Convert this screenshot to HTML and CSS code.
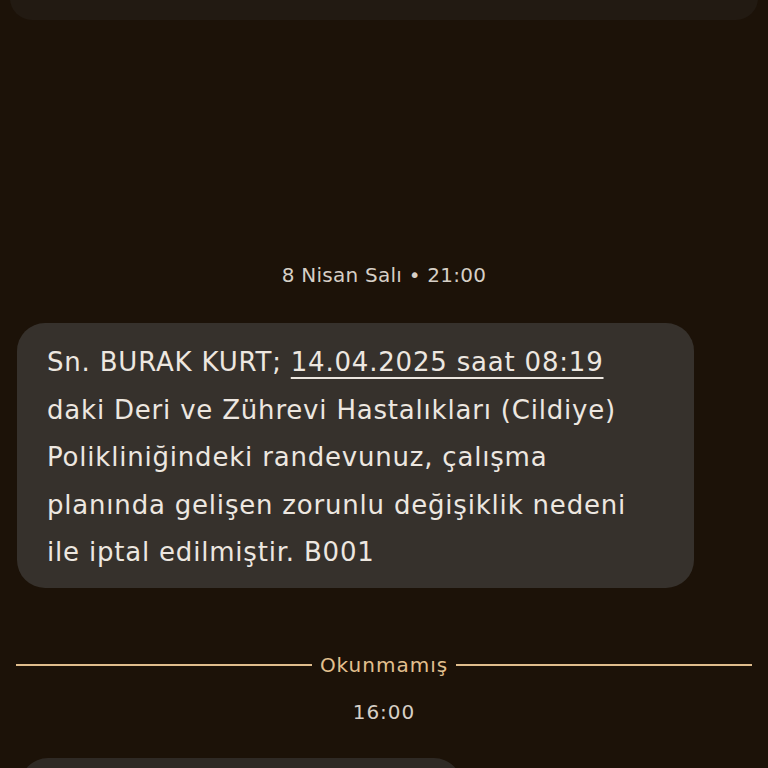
FILE: index.html
```html
<!DOCTYPE html>
<html lang="tr">
<head>
  <meta charset="UTF-8">
  <meta name="viewport" content="width=device-width, initial-scale=1.0">
  <title>Mesajlar</title>
  <link rel="stylesheet" href="styles.css">
</head>
<body>
  <div id="thread">
    <!-- Previous message (cut off at top) -->
    <div class="bubble bubble-top"></div>

    <p class="stamp stamp-date">8 Nisan Salı • 21:00</p>

    <!-- Incoming message -->
    <div class="bubble bubble-msg">
      <p>Sn. BURAK KURT; <span class="link">14.04.2025 saat 08:19</span><br>daki Deri ve Zührevi Hastalıkları (Cildiye)<br>Polikliniğindeki randevunuz, çalışma<br>planında gelişen zorunlu değişiklik nedeni<br>ile iptal edilmiştir. B001</p>
    </div>

    <!-- Unread divider -->
    <div class="unread">
      <span class="unread-line"></span>
      <span class="unread-label">Okunmamış</span>
      <span class="unread-line"></span>
    </div>

    <p class="stamp stamp-time">16:00</p>

    <div class="bubble bubble-next"></div>
  </div>
</body>
</html>
```

FILE: styles.css
```css
html, body {
  height: 100%;
}

body {
  background-color: #1c1208;
  color: #ede7e0;
  font-family: "DejaVu Sans", "Open Sans", sans-serif;
  margin: 0;
  overflow: hidden;
}

#thread {
  display: flex;
  flex-direction: column;
}

.bubble {
  background-color: #36312c;
  border-radius: 28px;
}

.bubble-top {
  height: 40px;
  margin: -20px 10px 0 10px;
  background-color: #221a12;
  border-radius: 0 0 22px 22px;
}

.stamp {
  margin: 0;
  text-align: center;
  color: #d6cfc6;
  font-size: 20px;
}

.stamp-date {
  margin-top: 241px;
  line-height: 28px;
  letter-spacing: 0.25px;
}

.bubble-msg {
  margin: 34px 74px 0 17px;
  padding: 16px 20px 11px 30px;
}

.bubble-msg p {
  margin: 0;
  font-size: 26px;
  line-height: 47.5px;
  letter-spacing: 0.8px;
  white-space: nowrap;
}

.link {
  text-decoration: underline;
  text-underline-offset: 6px;
  text-decoration-thickness: 2px;
}

.unread {
  display: flex;
  align-items: center;
  gap: 8px;
  margin: 63px 16px 0 16px;
}

.unread-line {
  flex: 1;
  height: 2px;
  background-color: #e0bd8c;
}

.unread-label {
  color: #e3c08f;
  font-size: 20px;
  line-height: 28px;
  letter-spacing: 1px;
}

.stamp-time {
  margin-top: 19px;
  line-height: 28px;
  letter-spacing: 1px;
}

.bubble-next {
  height: 60px;
  margin: 32px 306px 0 20px;
  background-color: #2f2a25;
}
```
